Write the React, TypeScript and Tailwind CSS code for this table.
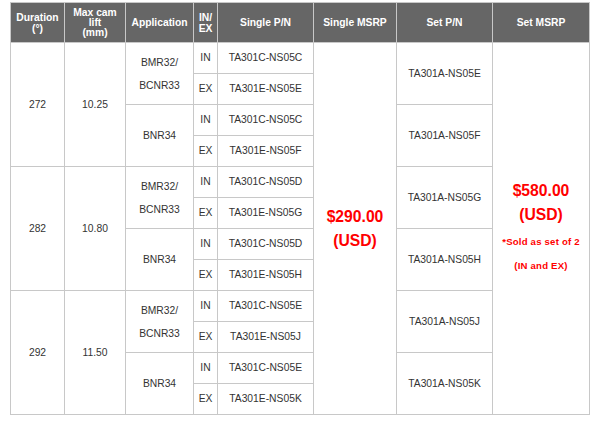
import React from 'react';

interface App {
  name: string[];
  inPn: string;
  exPn: string;
  setPn: string;
}

interface Group {
  duration: string;
  lift: string;
  apps: App[];
}

const groups: Group[] = [
  {
    duration: '272',
    lift: '10.25',
    apps: [
      { name: ['BMR32/', 'BCNR33'], inPn: 'TA301C-NS05C', exPn: 'TA301E-NS05E', setPn: 'TA301A-NS05E' },
      { name: ['BNR34'], inPn: 'TA301C-NS05C', exPn: 'TA301E-NS05F', setPn: 'TA301A-NS05F' }
    ]
  },
  {
    duration: '282',
    lift: '10.80',
    apps: [
      { name: ['BMR32/', 'BCNR33'], inPn: 'TA301C-NS05D', exPn: 'TA301E-NS05G', setPn: 'TA301A-NS05G' },
      { name: ['BNR34'], inPn: 'TA301C-NS05D', exPn: 'TA301E-NS05H', setPn: 'TA301A-NS05H' }
    ]
  },
  {
    duration: '292',
    lift: '11.50',
    apps: [
      { name: ['BMR32/', 'BCNR33'], inPn: 'TA301C-NS05E', exPn: 'TA301E-NS05J', setPn: 'TA301A-NS05J' },
      { name: ['BNR34'], inPn: 'TA301C-NS05E', exPn: 'TA301E-NS05K', setPn: 'TA301A-NS05K' }
    ]
  }
];

const td = 'border border-[#c8c8c8] p-0 text-center align-middle';
const th = 'border border-[#c8c8c8] p-0 text-center align-middle font-bold text-white text-[10.3px]';

export default function App() {
  return (
    <div className="min-h-screen bg-white pt-[2px] pl-[10px] font-['Liberation_Sans',Arial,sans-serif] text-[#333] text-[10.3px]">
      <table className="table-fixed border-collapse w-[580px]">
        <colgroup>
          <col className="w-[54px]" />
          <col className="w-[61px]" />
          <col className="w-[68px]" />
          <col className="w-[24px]" />
          <col className="w-[96px]" />
          <col className="w-[83px]" />
          <col className="w-[96px]" />
          <col className="w-[97px]" />
        </colgroup>
        <thead>
          <tr className="h-[40px] bg-[#666666]">
            <th className={`${th} leading-[11px]`}>Duration<br />(°)</th>
            <th className={`${th} leading-[10px]`}>Max cam<br />lift<br />(mm)</th>
            <th className={th}>Application</th>
            <th className={`${th} leading-[11px]`}>IN/<br />EX</th>
            <th className={th}>Single P/N</th>
            <th className={th}>Single MSRP</th>
            <th className={th}>Set P/N</th>
            <th className={th}>Set MSRP</th>
          </tr>
        </thead>
        <tbody>
          {groups.map((g, gi) =>
            g.apps.map((a, ai) => (
              <React.Fragment key={`${gi}-${ai}`}>
                <tr className="h-[31px]">
                  {ai === 0 && (
                    <>
                      <td rowSpan={4} className={td}>{g.duration}</td>
                      <td rowSpan={4} className={td}>{g.lift}</td>
                    </>
                  )}
                  <td rowSpan={2} className={`${td} leading-[23px]`}>
                    {a.name.map((n, i) => (
                      <div key={i}>{n}</div>
                    ))}
                  </td>
                  <td className={td}>IN</td>
                  <td className={td}>{a.inPn}</td>
                  {gi === 0 && ai === 0 && (
                    <td rowSpan={12} className={`${td} font-bold text-[#ff0000] text-[15.7px] leading-[24px]`}>
                      <div>$290.00</div>
                      <div>(USD)</div>
                    </td>
                  )}
                  <td rowSpan={2} className={td}>{a.setPn}</td>
                  {gi === 0 && ai === 0 && (
                    <td rowSpan={12} className={`${td} font-bold text-[#ff0000]`}>
                      <div className="text-[15.7px] leading-[24px]">$580.00</div>
                      <div className="text-[15.7px] leading-[24px]">(USD)</div>
                      <div className="mt-[3px] text-[9.6px] leading-[24px] tracking-[0.2px]">*Sold as set of 2</div>
                      <div className="text-[9.6px] leading-[24px] tracking-[0.2px]">(IN and EX)</div>
                    </td>
                  )}
                </tr>
                <tr className="h-[31px]">
                  <td className={td}>EX</td>
                  <td className={td}>{a.exPn}</td>
                </tr>
              </React.Fragment>
            ))
          )}
        </tbody>
      </table>
    </div>
  );
}
